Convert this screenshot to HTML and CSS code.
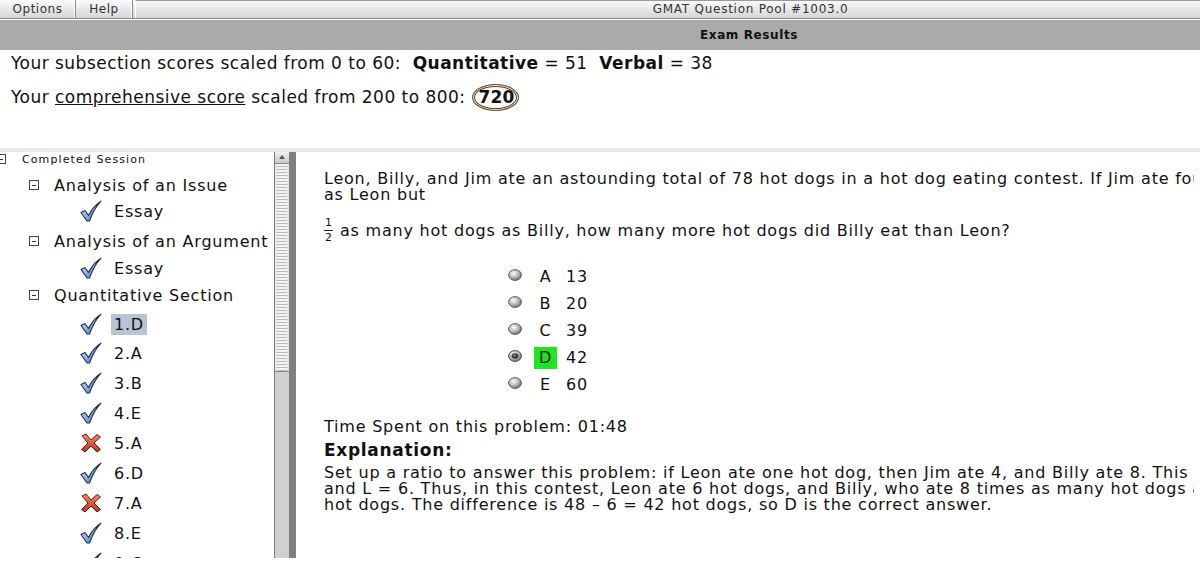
FILE: index.html
```html
<!DOCTYPE html>
<html>
  <head>
    <link rel="stylesheet" href="styles.css">
  </head>
  <body>
    <svg class="defs" width="0" height="0">
      <defs>
        <linearGradient id="check-fill" x1="0" y1="0" x2="1" y2="1">
          <stop offset="0" stop-color="#e4eefa" />
          <stop offset="0.5" stop-color="#8fb0dc" />
          <stop offset="1" stop-color="#2f5c9e" />
        </linearGradient>
        <linearGradient id="cross-fill" x1="0" y1="0" x2="0" y2="1">
          <stop offset="0" stop-color="#f08a70" />
          <stop offset="1" stop-color="#c0301c" />
        </linearGradient>
        <radialGradient id="radio-fill" cx="0.4" cy="0.35" r="0.7">
          <stop offset="0" stop-color="#ffffff" />
          <stop offset="0.5" stop-color="#bdbdbd" />
          <stop offset="1" stop-color="#6a6a6a" />
        </radialGradient>
        <symbol id="check" viewBox="0 0 22 22">
          <path d="M1 12.5 L5 10.5 L8.5 15.5 C11.5 9.5 15.5 4.5 21 1.2 C16.5 6 12.5 12.5 9.5 21 L7 21 Z" fill="url(#check-fill)" stroke="#1d2f58" stroke-width="1.1" stroke-linejoin="round" />
        </symbol>
        <symbol id="cross" viewBox="0 0 22 20">
          <path d="M2 3 L6 1 L11 7 L17 1.5 L20.5 4 L14 10 L20.5 16.5 L17 19 L11 13 L5 19 L1.5 16.5 L8 10 Z" fill="url(#cross-fill)" stroke="#6a1a10" stroke-width="1" stroke-linejoin="round" />
        </symbol>
        <symbol id="radio" viewBox="0 0 14 12">
          <ellipse cx="7" cy="6" rx="6.4" ry="5.4" fill="url(#radio-fill)" stroke="#505050" stroke-width="0.9" />
        </symbol>
        <symbol id="radio-on" viewBox="0 0 14 12">
          <ellipse cx="7" cy="6" rx="6.4" ry="5.4" fill="url(#radio-fill)" stroke="#404040" stroke-width="0.9" />
          <ellipse cx="7" cy="6" rx="3.4" ry="2.8" fill="#3a3a3a" />
          <ellipse cx="6.3" cy="5.4" rx="1.4" ry="1" fill="#8a8a8a" />
        </symbol>
      </defs>
    </svg>

    <div class="menubar">
      <div class="menu-btn">Options</div>
      <div class="menu-btn">Help</div>
      <div class="window-title">GMAT Question Pool #1003.0</div>
    </div>
    <div class="band">Exam Results</div>

    <div class="scores">
      <p class="score-line">Your subsection scores scaled from 0 to 60: &nbsp;<b>Quantitative</b> = 51 &nbsp;<b>Verbal</b> = 38</p>
      <p class="score-line">Your <u>comprehensive score</u> scaled from 200 to 800: <span class="circled">720</span></p>
    </div>
    <div class="sep"></div>

    <div class="main">
      <div class="tree">
        <div class="node root"><span class="toggle"></span>Completed Session</div>
        <div class="node section"><span class="toggle"></span>Analysis of an Issue</div>
        <div class="node leaf"><svg class="mark"><use href="#check" /></svg>Essay</div>
        <div class="node section tall"><span class="toggle"></span>Analysis of an Argument</div>
        <div class="node leaf short"><svg class="mark"><use href="#check" /></svg>Essay</div>
        <div class="node section mid"><span class="toggle"></span>Quantitative Section</div>
        <div class="node leaf item first"><svg class="mark"><use href="#check" /></svg><span class="selected">1.D</span></div>
        <div class="node leaf item"><svg class="mark"><use href="#check" /></svg>2.A</div>
        <div class="node leaf item"><svg class="mark"><use href="#check" /></svg>3.B</div>
        <div class="node leaf item"><svg class="mark"><use href="#check" /></svg>4.E</div>
        <div class="node leaf item"><svg class="mark"><use href="#cross" /></svg>5.A</div>
        <div class="node leaf item"><svg class="mark"><use href="#check" /></svg>6.D</div>
        <div class="node leaf item"><svg class="mark"><use href="#cross" /></svg>7.A</div>
        <div class="node leaf item"><svg class="mark"><use href="#check" /></svg>8.E</div>
        <div class="node leaf item"><svg class="mark"><use href="#check" /></svg>9.C</div>
      </div>
      <div class="vscroll">
        <div class="arrow"></div>
        <div class="thumb"></div>
      </div>
      <div class="divider"></div>

      <div class="question">
        <div class="stem">
          <div class="line">Leon, Billy, and Jim ate an astounding total of 78 hot dogs in a hot dog eating contest. If Jim ate four times as many hot dogs</div>
          <div class="line">as Leon but</div>
        </div>
        <div class="stem-frac">
          <span class="frac"><span class="num">1</span><span class="den">2</span></span>
          as many hot dogs as Billy, how many more hot dogs did Billy eat than Leon?
        </div>

        <div class="choices">
          <div class="choice"><svg class="radio"><use href="#radio" /></svg><span class="letter">A</span><span class="value">13</span></div>
          <div class="choice"><svg class="radio"><use href="#radio" /></svg><span class="letter">B</span><span class="value">20</span></div>
          <div class="choice"><svg class="radio"><use href="#radio" /></svg><span class="letter">C</span><span class="value">39</span></div>
          <div class="choice"><svg class="radio"><use href="#radio-on" /></svg><span class="letter correct">D</span><span class="value">42</span></div>
          <div class="choice"><svg class="radio"><use href="#radio" /></svg><span class="letter">E</span><span class="value">60</span></div>
        </div>

        <div class="time">Time Spent on this problem: 01:48</div>
        <div class="expl-title">Explanation:</div>
        <div class="expl">
          <div class="line">Set up a ratio to answer this problem: if Leon ate one hot dog, then Jim ate 4, and Billy ate 8. This means that L + 4L + 8L = 78,</div>
          <div class="line">and L = 6. Thus, in this contest, Leon ate 6 hot dogs, and Billy, who ate 8 times as many hot dogs as Leon, ate 48</div>
          <div class="line">hot dogs. The difference is 48 – 6 = 42 hot dogs, so D is the correct answer.</div>
        </div>
      </div>
    </div>
  </body>
</html>
```

FILE: styles.css
```css
html,
body {
  margin: 0;
  height: 100%;
  overflow: hidden;
  background: #ffffff;
  font-family: "DejaVu Sans", sans-serif;
  color: #111;
}
.defs {
  position: absolute;
}

/* top bar */
.menubar {
  display: flex;
  height: 18px;
  border-bottom: 1px solid #8a8a8a;
  background: linear-gradient(#fbfbfb, #d6d6d6);
  font-size: 12px;
  letter-spacing: 0.5px;
  color: #333;
}
.menu-btn {
  display: flex;
  align-items: center;
  justify-content: center;
  padding: 0 11px;
  border-right: 1px solid #8a8a8a;
  box-shadow: inset -1px 0 0 #ffffff;
}
.menu-btn:first-child {
  width: 53px;
}
.menu-btn:nth-child(2) {
  width: 34px;
}
.window-title {
  flex: 1;
  text-align: center;
  line-height: 16px;
  letter-spacing: 0.75px;
  padding-left: 165px;
  border-left: 1px solid #ffffff;
  margin-left: 2px;
  border-top: 1px solid #9a9a9a;
}
.band {
  height: 30px;
  margin-top: 1px;
  background: #aaaaaa;
  text-align: center;
  line-height: 31px;
  font-size: 12px;
  letter-spacing: 0.6px;
  font-weight: bold;
  color: #111;
  padding-left: 298px;
}

/* scores */
.scores {
  height: 98px;
  padding-left: 11px;
}
.score-line {
  margin: 0;
  font-size: 17px;
  letter-spacing: 0.47px;
  line-height: 20px;
  white-space: nowrap;
}
.score-line:first-child {
  padding-top: 3px;
}
.score-line + .score-line {
  margin-top: 11px;
}
.circled {
  display: inline-block;
  padding: 2px 4px 3px 5px;
  border-radius: 50%;
  border: 1px solid #4a5a22;
  box-shadow: inset 0 0 0 1px #ffffff, inset 0 0 0 2px #7a2a1c;
  font-weight: bold;
  letter-spacing: 0.2px;
  margin-left: 1px;
}
.sep {
  height: 4px;
  background: #e9e9e9;
}

/* session tree */
.main {
  display: flex;
  align-items: flex-start;
  height: 429px;
}
.tree {
  width: 274px;
  height: 406px;
  overflow: hidden;
  font-size: 16px;
  letter-spacing: 0.8px;
  white-space: nowrap;
}
.node {
  display: flex;
  align-items: center;
  height: 26px;
}
.node.root {
  height: 14px;
  padding-bottom: 6px;
  font-size: 11px;
  letter-spacing: 1.1px;
  padding-left: 22px;
  position: relative;
}
.node.root .toggle {
  left: -4px;
}
.toggle {
  position: absolute;
  width: 8px;
  height: 8px;
  border: 1px solid #444;
  background: #fff;
}
.toggle::after {
  content: "";
  position: absolute;
  left: 2px;
  right: 2px;
  top: 4px;
  height: 1px;
  background: #333;
}
.node.section {
  position: relative;
  padding-left: 54px;
}
.node.section .toggle {
  left: 29px;
}
.node.section.tall {
  height: 32px;
  padding-top: 2px;
  box-sizing: border-box;
}
.node.leaf.short {
  height: 24px;
}
.node.section.mid {
  height: 30px;
}
.node.leaf {
  padding-left: 80px;
}
.node.item {
  height: 30px;
}
.node.item.first {
  height: 28px;
}
.mark {
  width: 22px;
  height: 22px;
  margin-right: 12px;
}
.selected {
  background: #b9c3d4;
  padding: 1px 3px;
  margin-left: -3px;
}

/* scrollbar and splitter */
.vscroll {
  width: 14px;
  height: 406px;
  border-left: 1px solid #7a7a7a;
  background: #d0d0d0;
}
.arrow {
  height: 11px;
  border-bottom: 1px solid #8a8a8a;
  background: linear-gradient(#f0f0f0, #c8c8c8);
  position: relative;
}
.arrow::after {
  content: "";
  position: absolute;
  left: 4px;
  top: 3px;
  border-left: 3px solid transparent;
  border-right: 3px solid transparent;
  border-bottom: 4px solid #555;
}
.thumb {
  height: 207px;
  border-bottom: 1px solid #8a8a8a;
  background: repeating-linear-gradient(#f4f4f4 0, #f4f4f4 2px, #b8b8b8 2px, #b8b8b8 3px);
  box-shadow: inset 2px 0 0 #e6e6e6, inset -2px 0 0 #e6e6e6;
}
.divider {
  width: 7px;
  height: 406px;
  background: #7f7f7f;
}

/* question */
.question {
  flex: 1;
  min-width: 0;
  height: 429px;
  overflow: hidden;
  margin-right: 6px;
  padding: 19px 0 0 28px;
  font-size: 16px;
  letter-spacing: 0.78px;
  white-space: nowrap;
}
.line {
  line-height: 16px;
}
.stem-frac {
  display: flex;
  align-items: center;
  margin-top: 11px;
  height: 32px;
}
.frac {
  display: inline-flex;
  flex-direction: column;
  align-items: center;
  font-size: 11px;
  letter-spacing: 0;
  line-height: 12px;
  margin-right: 7px;
}
.num {
  border-bottom: 1px solid #222;
  padding: 0 1px 1px;
}
.den {
  padding-top: 1px;
}
.choices {
  margin-top: 17px;
  padding-left: 184px;
}
.choice {
  display: flex;
  align-items: center;
  height: 27px;
}
.radio {
  width: 14px;
  height: 12px;
  margin-top: -4px;
  margin-right: 18px;
}
.letter {
  width: 23px;
  height: 22px;
  display: flex;
  align-items: center;
  justify-content: center;
  margin-right: 9px;
  margin-left: -6px;
}
.letter.correct {
  background: #1fe61f;
}
.time {
  margin-top: 19px;
  line-height: 20px;
}
.expl-title {
  font-weight: bold;
  font-size: 17px;
  letter-spacing: 0.7px;
  line-height: 26px;
}
.expl {
  margin-top: 2px;
}
.expl .line {
  line-height: 16px;
}
```
